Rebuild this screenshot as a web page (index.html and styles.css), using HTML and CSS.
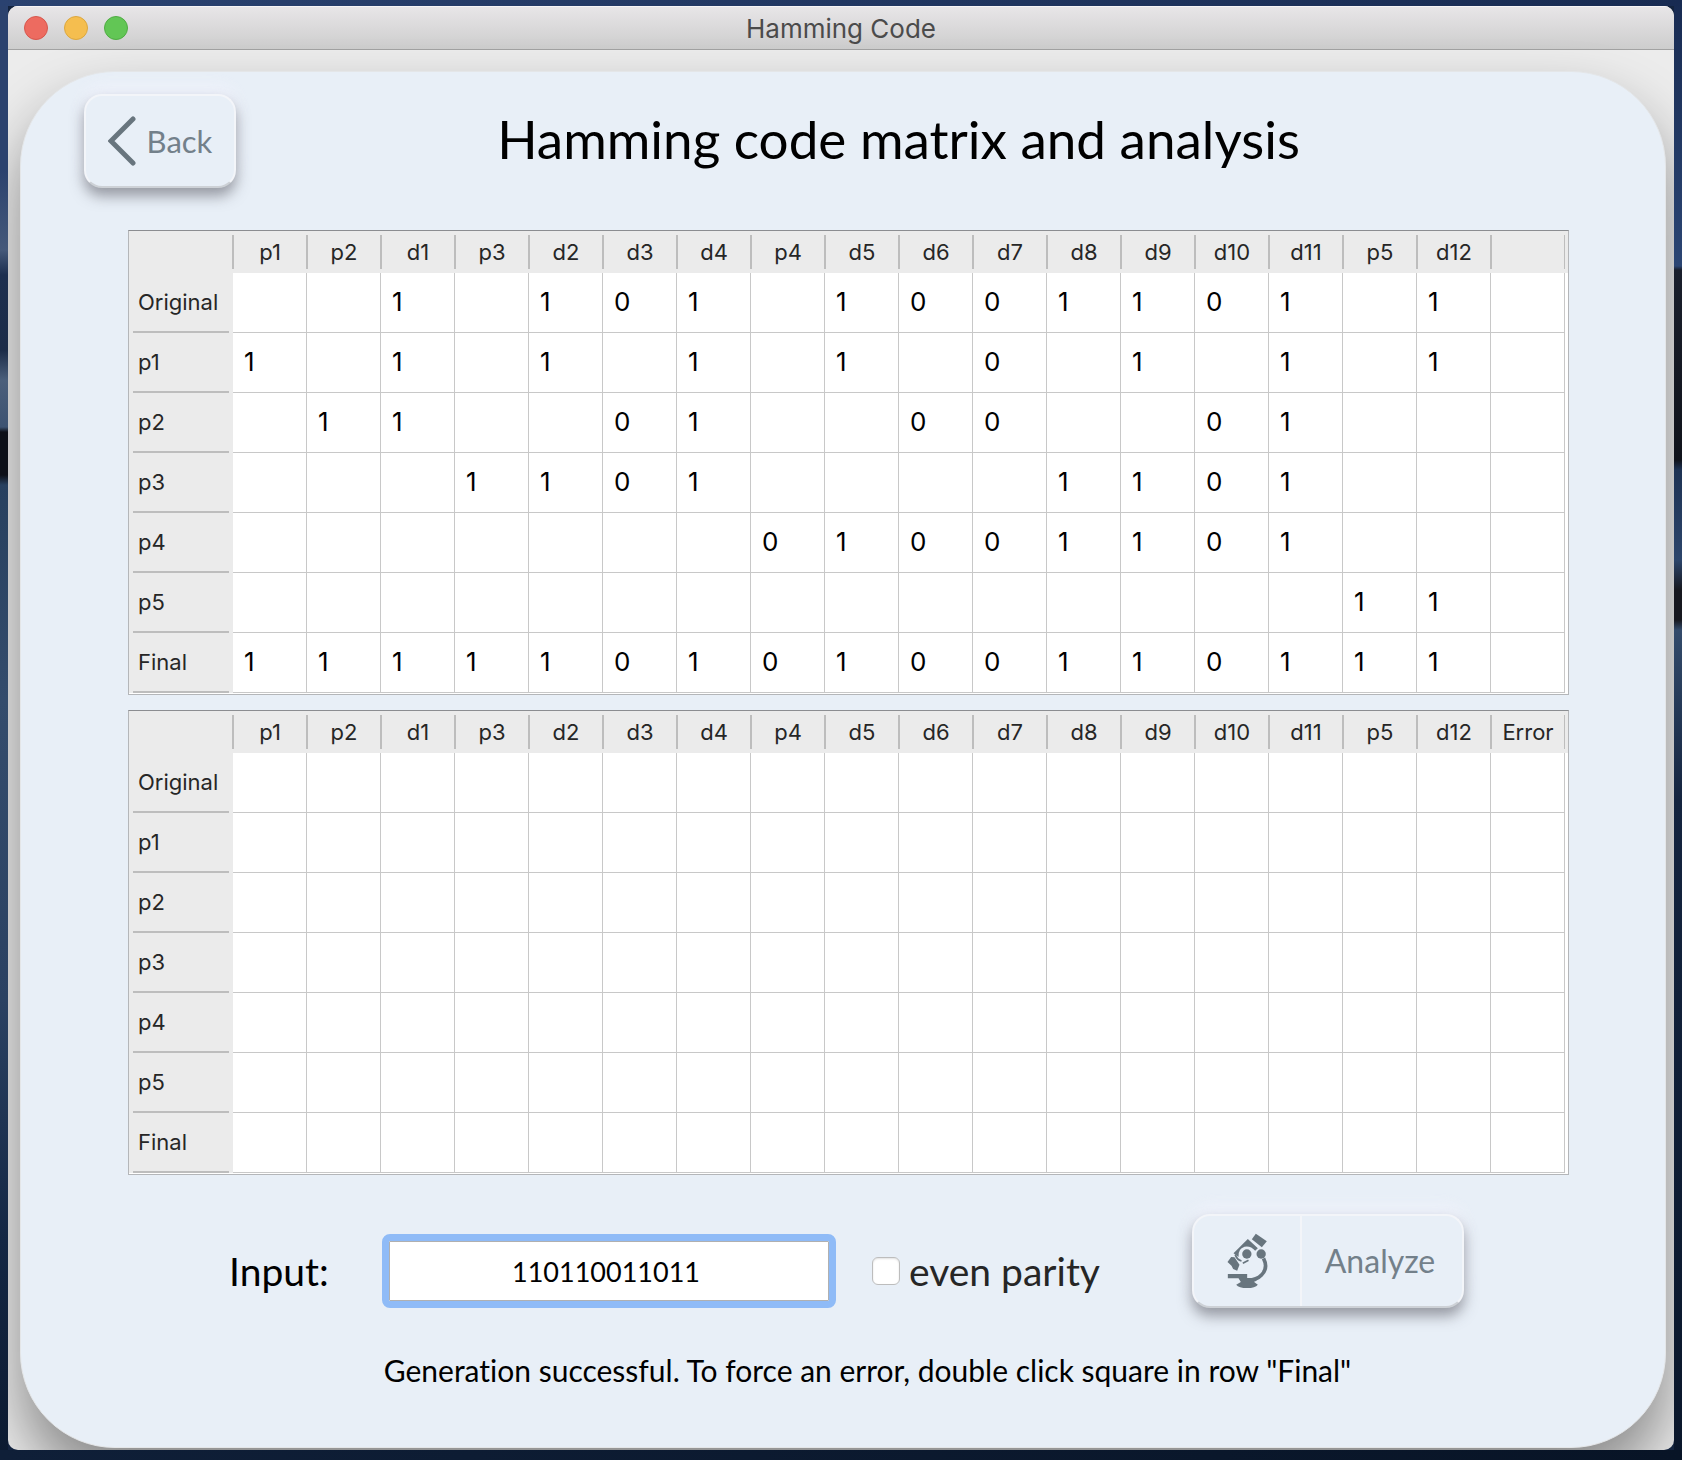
FILE: index.html
```html
<!DOCTYPE html>
<html lang="en">
<head>
<meta charset="utf-8">
<title>Hamming Code</title>
<link rel="stylesheet" href="styles.css">
</head>
<body>
<div class="window">
  <div class="titlebar">
    <div class="lights"><span class="light red"></span><span class="light yellow"></span><span class="light green"></span></div>
    <span class="window-title">Hamming Code</span>
  </div>
  <main class="panel">
    <header class="top">
      <button class="soft-button back" type="button">
        <svg width="28" height="50" viewBox="0 0 28 50" fill="none" stroke="#68757e" stroke-width="5" aria-hidden="true"><path d="M25 3 3 25l22 22" stroke-linecap="round"/></svg>
        <span>Back</span>
      </button>
      <h1>Hamming code matrix and analysis</h1>
    </header>
    <div class="tables">
      <div class="matrix"><table id="generated" aria-label="Generated code"></table></div>
      <div class="matrix"><table id="analyzed" aria-label="Analysis"></table></div>
    </div>
    <form class="controls">
      <label class="input-label" for="code">Input:</label>
      <input class="code" id="code" type="text" value="110110011011">
      <label class="parity"><input type="checkbox"><span>even parity</span></label>
      <button class="soft-button analyze" type="button">
        <span class="icon-cell">
          <svg width="41" height="56" viewBox="200 135 122 168" fill="#68757e" aria-hidden="true">
            <path d="M286 137 319 160 304 178 274 154Z"/>
            <path d="M262 153 292 181 284 188Q270 172 252 176 232 182 234 207L219 196Z"/>
            <circle cx="259" cy="198" r="14"/>
            <circle cx="302" cy="198" r="14"/>
            <path d="M212 207 222 208 237 230 230 248 218 243 213 233 201 222Z"/>
            <path d="M224 200Q230 216 243 219" fill="none" stroke="#68757e" stroke-width="5"/>
            <path d="M247 226 264 217" stroke="#68757e" stroke-width="5"/>
            <path d="M309 211Q324 240 303 261 289 276 262 276" fill="none" stroke="#68757e" stroke-width="11"/>
            <path d="M202 258H260V270H292Q288 281 280 281L292 290Q284 300 260 300 235 300 227 290L241 282 234 271H202Z"/>
          </svg>
        </span>
        <span class="text-cell">Analyze</span>
      </button>
    </form>
    <p class="status">Generation successful. To force an error, double click square in row "Final"</p>
  </main>
</div>
<script src="app.js"></script>
</body>
</html>
```
FILE: styles.css
```css
* { box-sizing: border-box; }

body {
  margin: 0;
  min-height: 100vh;
  padding: 6px 8px 10px;
  display: flex;
  font-family: Lato, "Liberation Sans", sans-serif;
  font-variant-ligatures: none;
  color: #000;
  background:
    linear-gradient(90deg, #2a4270, #182b52) top / 100% 6px no-repeat,
    linear-gradient(90deg, #0f1f38, #081426) bottom / 100% 10px no-repeat,
    linear-gradient(#2b426e 0, #2b426e 170px, #45597a 250px, #1d2f4f 275px, #1c2c48 350px, #4b5f7b 380px, #3d5372 427px, #0d1018 432px, #0d1018 475px, #27405f 485px, #344c6c 700px, #2a4162 1000px, #142744 1240px, #0c1a30) left / 8px 100% no-repeat,
    linear-gradient(#182b52 0, #2b4573 266px, #1a1f2c 270px, #10131b 460px, #1e3354 470px, #2c456b 560px, #17181f 590px, #17181f 620px, #334b6b 630px, #14243f 800px, #0a172b) right / 8px 100% no-repeat,
    #14243f;
}

.window {
  flex: 1;
  min-width: 0;
  display: flex;
  flex-direction: column;
  border-radius: 10px;
  overflow: hidden;
  background: #ececec;
}

.titlebar {
  height: 44px;
  display: grid;
  grid-template-columns: 1fr auto 1fr;
  align-items: center;
  padding: 0 16px;
  background: linear-gradient(#e8e6e8, #cdcdcd);
  border-bottom: 1px solid #a2a2a2;
  box-shadow: inset 0 1px #f6f4f6;
}

.lights { display: flex; gap: 16px; }
.light { width: 24px; height: 24px; border-radius: 50%; border: 1px solid; }
.red { background: #ed6b60; border-color: #d6574d; }
.yellow { background: #f5be4f; border-color: #dba73f; }
.green { background: #62c655; border-color: #4fac43; }

.window-title { padding-top: 2px; font: 26px/36px Inter, sans-serif; color: #4b4b4b; }

.panel {
  flex: 1;
  display: flex;
  flex-direction: column;
  margin: 21px 8px 2px 12px;
  padding: 22px 0 0;
  border: 1px solid #e4e6e8;
  border-radius: 95px;
  background: #e8eff7;
  box-shadow: 0 34px 60px rgba(0, 0, 0, .42);
}

.top {
  display: flex;
  align-items: center;
  padding: 0 104px 0 63px;
}

h1 {
  flex: 1;
  margin: 0;
  padding-bottom: 4px;
  font-size: 53px;
  line-height: 64px;
  font-weight: 400;
  text-align: center;
}

.soft-button {
  height: 94px;
  padding: 0;
  display: flex;
  align-items: center;
  justify-content: center;
  font: 31px/40px Lato, sans-serif;
  color: #73808a;
  background: #e8eff7;
  border: 2px solid #f3f5f9;
  border-bottom-color: #cdd1d6;
  border-radius: 18px;
  box-shadow: 0 8px 14px rgba(70, 70, 80, .5), 0 -8px 16px rgba(245, 245, 255, .6);
}

.back { width: 152px; gap: 11px; }

.tables {
  display: flex;
  flex-direction: column;
  gap: 15px;
  margin: 42px 96px 0 107px;
}

.matrix {
  padding-right: 3px;
  padding-bottom: 1px;
  border: 1px solid #b4b6b9;
  border-top-color: #8b8d91;
  background: linear-gradient(#ebebeb 42px, #fff 42px);
}

table {
  width: 100%;
  table-layout: fixed;
  border-collapse: separate;
  border-spacing: 0;
  font-family: Inter, sans-serif;
}

th { padding: 0; font-size: 22px; font-weight: 400; color: #262626; }

thead th {
  height: 42px;
  line-height: 42px;
  text-align: center;
  background:
    linear-gradient(#bdbdbd, #bdbdbd) 0 4px / 1px 34px no-repeat,
    linear-gradient(#bdbdbd, #bdbdbd) 100% 4px / 1px 34px no-repeat,
    #ebebeb;
}

thead .corner {
  width: 104px;
  height: 42px;
  padding: 0;
  border: 0;
  background: linear-gradient(#bdbdbd, #bdbdbd) 100% 4px / 1px 34px no-repeat, #ebebeb;
}

tbody th {
  height: 60px;
  padding: 0 0 2px 9px;
  text-align: left;
  background: linear-gradient(#bdbdbd, #bdbdbd) 4px 100% / 96px 2px no-repeat, #ebebeb;
}

td {
  height: 60px;
  padding: 0 0 2px 11px;
  font-size: 26px;
  background: #fff;
  border-right: 1px solid #c8c8c8;
  border-bottom: 1px solid #c8c8c8;
}

.controls {
  display: flex;
  align-items: flex-end;
  margin-top: 39px;
  padding: 0 201px 0 208px;
}

.input-label, .parity { font-size: 39px; line-height: 74px; }
.input-label { width: 153px; }

.code {
  flex: 1;
  min-width: 0;
  height: 60px;
  margin: 7px 43px 7px 7px;
  padding: 0 6px 0 0;
  font: 27px/56px Lato, sans-serif;
  color: #000;
  text-align: center;
  background: #fff;
  border: 1px solid #b0b0b0;
  border-radius: 1px;
  outline: 7px solid #8fbbf7;
}

.parity {
  width: 320px;
  display: flex;
  align-items: center;
  gap: 9px;
  color: #262626;
}

.parity input {
  appearance: none;
  width: 28px;
  height: 28px;
  margin: 0;
  background: #fff;
  border: 1px solid #bdbdbd;
  border-radius: 6px;
  box-shadow: inset 0 1px 2px rgba(0, 0, 0, .12);
}

.analyze { width: 272px; align-items: stretch; }
.icon-cell, .text-cell { display: flex; align-items: center; justify-content: center; }
.icon-cell { width: 108px; border-right: 2px solid #f3f5f9; }
.text-cell { flex: 1; padding-right: 4px; font-size: 32px; }

.status {
  margin: 40px 0 0;
  padding: 0 48px 50px 97px;
  font-size: 30px;
  line-height: 44px;
  text-align: center;
}
```
FILE: app.js
```js
const columns = ["p1", "p2", "d1", "p3", "d2", "d3", "d4", "p4", "d5", "d6", "d7", "d8", "d9", "d10", "d11", "p5", "d12"];

// One character per column; a dot is an empty square.
const generated = {
  Original: "..1.101.1001101.1.",
  p1: "1.1.1.1.1.0.1.1.1.",
  p2: ".11..01..00..01...",
  p3: "...1101....1101...",
  p4: ".......01001101...",
  p5: "...............11.",
  Final: "11111010100110111."
};

function fill(id, lastHeading, rows) {
  const headings = [...columns, lastHeading];
  const head = headings.map(h => `<th scope="col">${h}</th>`).join("");
  const body = Object.entries(rows).map(([name, bits]) =>
    `<tr><th scope="row">${name}</th>${[...bits].map(b => `<td>${b === "." ? "" : b}</td>`).join("")}</tr>`
  ).join("");
  document.getElementById(id).innerHTML =
    `<thead><tr><td class="corner"></td>${head}</tr></thead><tbody>${body}</tbody>`;
}

const empty = Object.fromEntries(Object.keys(generated).map(name => [name, ".".repeat(18)]));
fill("generated", "", generated);
fill("analyzed", "Error", empty);
```
